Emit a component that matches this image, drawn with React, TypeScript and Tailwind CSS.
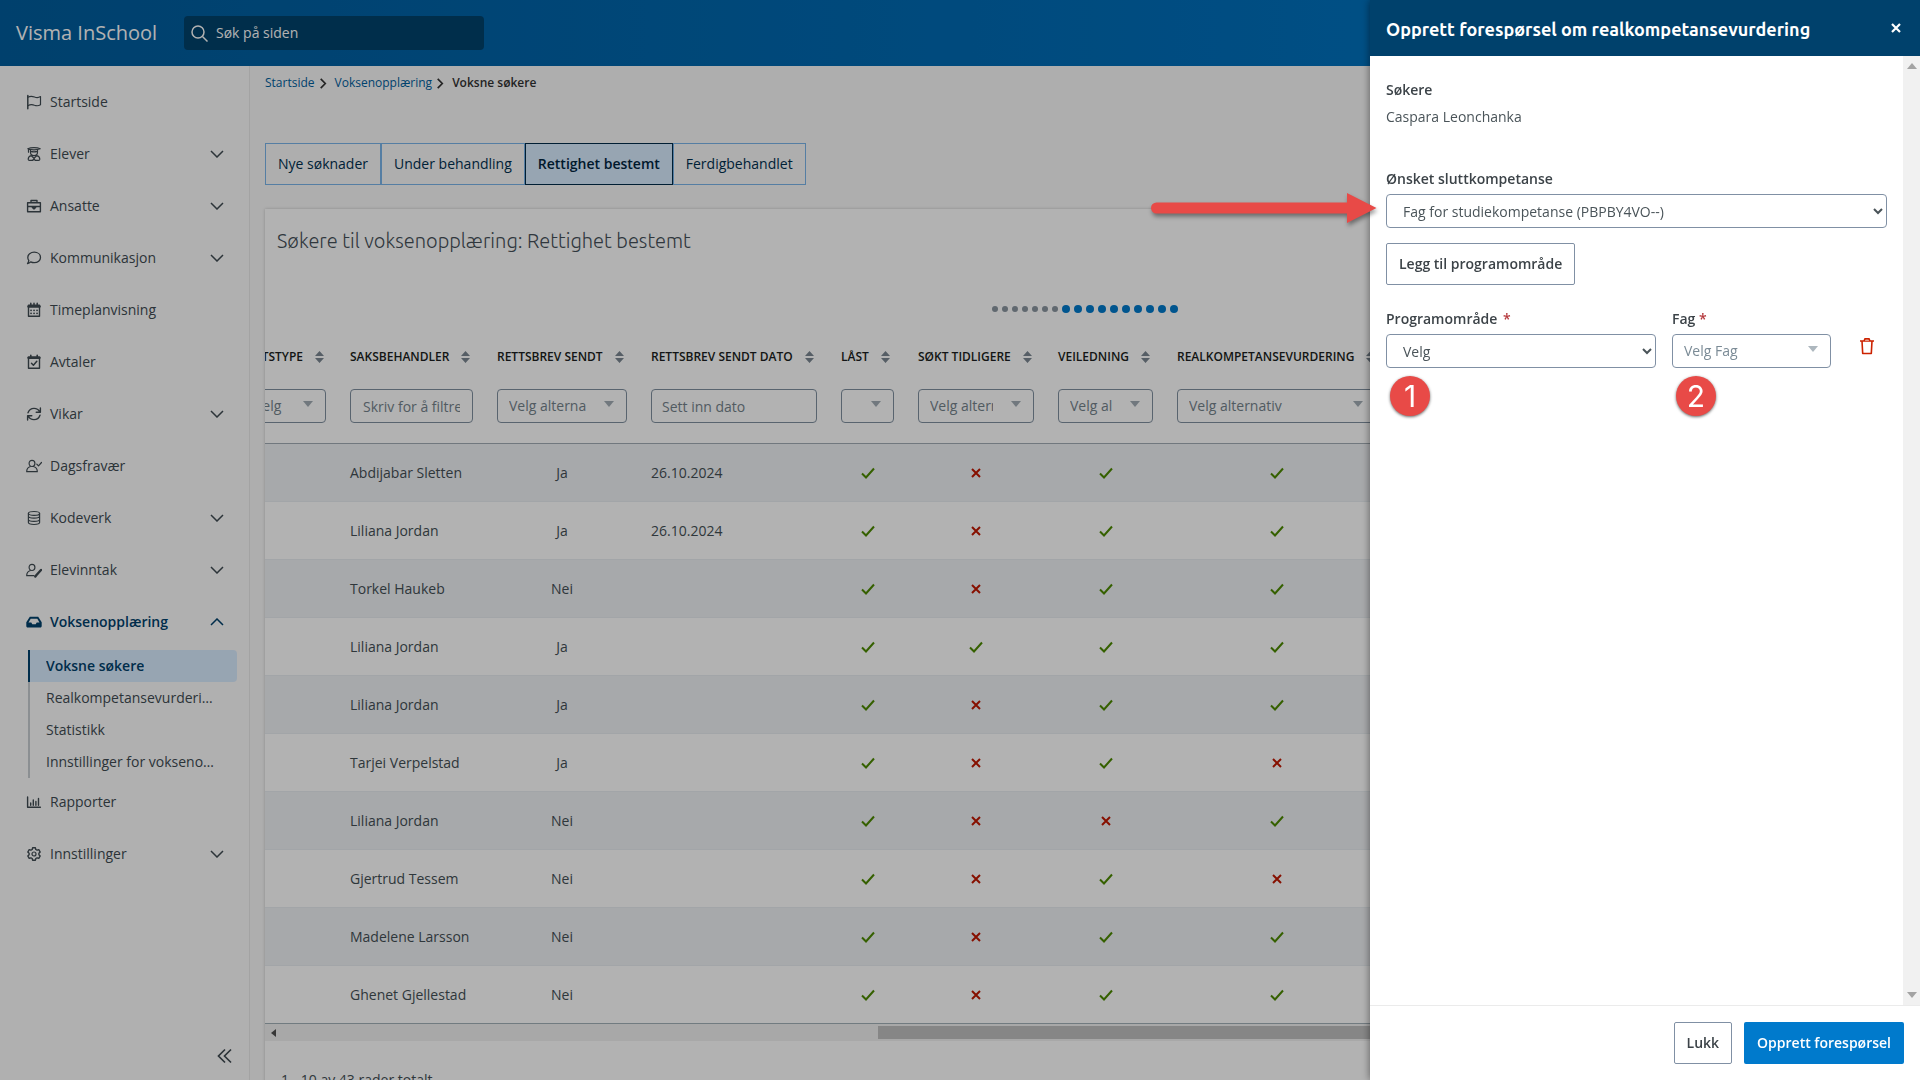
import React from "react";

type IconProps = { className?: string };

const Svg = ({ children, className = "h-4 w-4" }: { children: React.ReactNode; className?: string }) => (
  <svg
    viewBox="0 0 16 16"
    className={`shrink-0 ${className}`}
    fill="none"
    stroke="currentColor"
    strokeWidth="1.2"
    strokeLinecap="round"
    strokeLinejoin="round"
    aria-hidden="true"
  >
    {children}
  </svg>
);

const FlagIcon = () => (
  <Svg>
    <path d="M1.800 1.500v13.200" strokeWidth="1.500" />
    <path d="M1.800 3.200C4.500 1.800 6.500 2.200 8.500 3c2 .8 4 .8 6-.4v8.200c-2 1.200-4 1.200-6 .5-2-.8-4-1-6.700.4" />
  </Svg>
);
const StudentIcon = () => (
  <Svg>
    <path d="M1.800 2.800C5 1.200 11 1.200 14.200 2.800 11 4.200 5 4.200 1.800 2.800zM2.500 3v3.200" />
    <path d="M4.500 4v2.300c0 4.400 7 4.400 7 0V4M4.800 5.400c2 .6 4.400.6 6.400 0" />
    <path d="M5.300 9.700C3.300 10.200 2.200 11.200 2.200 13.200c0 .8.400 1.200 1.200 1.200h2.200c1.400 0 2.400-1 2.400-2.200 0 1.200 1 2.200 2.400 2.200h2.200c.8 0 1.200-.4 1.200-1.200 0-2-1.100-3-3.100-3.500M5.300 9.700L8 12.200l2.700-2.500" />
  </Svg>
);
const BriefcaseIcon = () => (
  <Svg>
    <path d="M5 4.500v-2h6v2M1.600 4.800h12.800v9H1.600zM1.600 8.500h12.800" strokeWidth="1.400" />
    <path d="M6.300 8.500h3.400v1L8 11 6.300 9.500z" fill="currentColor" />
  </Svg>
);
const ChatIcon = () => (
  <Svg>
    <path d="M8.200 2.200c3.600 0 6.300 2.200 6.300 5.200s-2.700 5.300-6.300 5.300c-1.300 0-2.500-.3-3.500-.8-.8.900-1.800 1.600-3.200 1.700.8-.9 1.200-2 1.300-3.200C2.100 9.500 1.800 8.500 1.800 7.400c0-3 2.800-5.200 6.400-5.200z" strokeWidth="1.300" />
  </Svg>
);
const CalendarIcon = () => (
  <Svg>
    <path d="M2.500 3.200h11v11h-11z" strokeWidth="1.400" />
    <path d="M2.500 4.500h11" strokeWidth="2.500" />
    <path d="M4.800 1.200v2M8 1.200v2M11.200 1.200v2" strokeWidth="1.500" />
    <path d="M5 8.300h.1M8 8.300h.1M11 8.300h.1M5 11.300h.1M8 11.300h.1M11 11.300h.1" strokeWidth="1.700" />
  </Svg>
);
const CalendarCheckIcon = () => (
  <Svg>
    <path d="M2.500 3.200h11v11h-11z" strokeWidth="1.400" />
    <path d="M2.500 3.800h11" strokeWidth="2.400" />
    <path d="M4.800 1.200v2M11.200 1.200v2" strokeWidth="1.600" />
    <path d="M5.500 9.300l1.900 1.900 3.400-4" strokeWidth="1.500" />
  </Svg>
);
const SyncIcon = () => (
  <Svg>
    <path d="M2 6.800C3 4 5.300 2.400 8 2.400c2.500 0 4.600 1.300 5.700 3.400M14.400 2v4.300h-4.200M14 9.200c-1 2.800-3.300 4.400-6 4.400-2.500 0-4.600-1.300-5.700-3.400M1.600 14V9.700h4.200" strokeWidth="1.400" />
  </Svg>
);
const UserCheckIcon = () => (
  <Svg>
    <path d="M6 2.300c1.700 0 2.900 1.200 2.900 3S7.700 8.500 6 8.500 3.100 7.100 3.100 5.300 4.300 2.300 6 2.300zM4 8.700C2 9.300.7 10 .7 13.700h10.600c0-3.700-1.300-4.400-3.300-5" />
    <path d="M10.800 6.200l1.700 1.700 3-3.400" />
  </Svg>
);
const UserPenIcon = () => (
  <Svg>
    <path d="M6 2.300c1.700 0 2.900 1.200 2.900 3S7.700 8.500 6 8.500 3.100 7.100 3.100 5.300 4.300 2.300 6 2.300zM4 8.700C2 9.300.7 10 .7 13.700h7.300" />
    <path d="M15 8l-4.700 5.200-1 1.300" strokeWidth="2.400" />
  </Svg>
);
const DatabaseIcon = () => (
  <Svg>
    <ellipse cx="8" cy="3.400" rx="5.600" ry="1.900" />
    <path d="M2.400 3.400v9.200c0 2.500 11.200 2.500 11.200 0V3.400M2.400 6.300c0 2.500 11.200 2.500 11.200 0M2.400 9.500c0 2.500 11.200 2.500 11.200 0" />
  </Svg>
);
const InboxIcon = () => (
  <Svg>
    <path
      d="M3.800 2.800h8.400l3.500 5.500v3.700c0 .9-.5 1.500-1.400 1.500H1.700c-.9 0-1.400-.6-1.400-1.500V8.300zM4.700 4.700L2.500 8.400h2.800l1 1.800h3.400l1-1.800h2.800l-2.200-3.700z"
      fill="currentColor"
      fillRule="evenodd"
      stroke="none"
    />
  </Svg>
);
const ChartIcon = () => (
  <Svg>
    <path d="M1.600 3v10.300h12.800" strokeWidth="1.400" />
    <path d="M4.700 11.200V9M7.300 11.200V6M9.900 11.200V7.500M12.500 11.200V4.500" strokeWidth="1.400" />
  </Svg>
);
const GearIcon = () => (
  <Svg>
    <path d="M6.600 1.800h2.800l.4 1.700 1.300.7 1.700-.5 1.400 2.400-1.300 1.200v1.400l1.300 1.200-1.400 2.400-1.700-.5-1.300.7-.4 1.700H6.600l-.4-1.700-1.300-.7-1.700.5-1.400-2.400 1.300-1.200V7.300L1.800 6.100l1.400-2.400 1.700.5 1.300-.7z" strokeWidth="1.400" />
    <circle cx="8" cy="8" r="2" />
  </Svg>
);
const Chevron = ({ up = false }: { up?: boolean }) => (
  <svg viewBox="0 0 14 8" className="h-2 w-3.5" fill="none" stroke="currentColor" strokeWidth="1.500" aria-hidden="true">
    <path d={up ? "M1 7l6-6 6 6" : "M1 1l6 6 6-6"} />
  </svg>
);

const Triangle = ({ className = "" }: IconProps) => (
  <svg viewBox="0 0 10 6" className={`h-1.5 w-2.5 ${className}`} fill="currentColor" aria-hidden="true">
    <path d="M0 0h10L5 6z" />
  </svg>
);
const SortIcon = () => (
  <svg viewBox="0 0 9 12" className="h-3 w-[9px] shrink-0 text-[#7b8792]" fill="currentColor" aria-hidden="true">
    <path d="M0 5L4.500 0 9 5zM0 7h9l-4.500 5z" />
  </svg>
);

const Mark = ({ ok }: { ok: boolean }) =>
  ok ? (
    <svg viewBox="0 0 14 12" className="mx-auto h-3 w-3.5" fill="none" stroke="#4c8a00" strokeWidth="2" role="img" aria-label="Ja">
      <path d="M1 6.500l4 4 8-9" />
    </svg>
  ) : (
    <svg viewBox="0 0 10 10" className="mx-auto h-2.5 w-2.5" fill="none" stroke="#c01800" strokeWidth="2" role="img" aria-label="Nei">
      <path d="M1 1l8 8M9 1L1 9" />
    </svg>
  );

const menuTop = [
  { label: "Startside", Icon: FlagIcon, open: false },
  { label: "Elever", Icon: StudentIcon, open: true },
  { label: "Ansatte", Icon: BriefcaseIcon, open: true },
  { label: "Kommunikasjon", Icon: ChatIcon, open: true },
  { label: "Timeplanvisning", Icon: CalendarIcon, open: false },
  { label: "Avtaler", Icon: CalendarCheckIcon, open: false },
  { label: "Vikar", Icon: SyncIcon, open: true },
  { label: "Dagsfravær", Icon: UserCheckIcon, open: false },
  { label: "Kodeverk", Icon: DatabaseIcon, open: true },
  { label: "Elevinntak", Icon: UserPenIcon, open: true },
];
const menuBottom = [
  { label: "Rapporter", Icon: ChartIcon, open: false },
  { label: "Innstillinger", Icon: GearIcon, open: true },
];
const subMenu = ["Voksne søkere", "Realkompetansevurderinger", "Statistikk", "Innstillinger for voksenopplæring"];

const MenuItem = ({ label, Icon, open }: { label: string; Icon: () => React.ReactElement; open: boolean }) => (
  <a href="#" className="mb-1 flex h-12 items-center pr-[25px] pl-[26px]">
    <Icon />
    <span className="ml-2 flex-1">{label}</span>
    {open && <Chevron />}
  </a>
);

const tabs = ["Nye søknader", "Under behandling", "Rettighet bestemt", "Ferdigbehandlet"];

const columns: { label: string; filter: "select" | "text" | "date" | "blank" }[] = [
  { label: "Rettstype", filter: "select" },
  { label: "Saksbehandler", filter: "text" },
  { label: "Rettsbrev sendt", filter: "select" },
  { label: "Rettsbrev sendt dato", filter: "date" },
  { label: "Låst", filter: "blank" },
  { label: "Søkt tidligere", filter: "select" },
  { label: "Veiledning", filter: "select" },
  { label: "Realkompetansevurdering", filter: "select" },
];

type Row = { name: string; sent: string; date: string; marks: boolean[] };
const rows: Row[] = [
  { name: "Abdijabar Sletten", sent: "Ja", date: "26.10.2024", marks: [true, false, true, true] },
  { name: "Liliana Jordan", sent: "Ja", date: "26.10.2024", marks: [true, false, true, true] },
  { name: "Torkel Haukeb", sent: "Nei", date: "", marks: [true, false, true, true] },
  { name: "Liliana Jordan", sent: "Ja", date: "", marks: [true, true, true, true] },
  { name: "Liliana Jordan", sent: "Ja", date: "", marks: [true, false, true, true] },
  { name: "Tarjei Verpelstad", sent: "Ja", date: "", marks: [true, false, true, false] },
  { name: "Liliana Jordan", sent: "Nei", date: "", marks: [true, false, false, true] },
  { name: "Gjertrud Tessem", sent: "Nei", date: "", marks: [true, false, true, false] },
  { name: "Madelene Larsson", sent: "Nei", date: "", marks: [true, false, true, true] },
  { name: "Ghenet Gjellestad", sent: "Nei", date: "", marks: [true, false, true, true] },
];

const Filter = ({ label, filter }: { label: string; filter: string }) => {
  if (filter === "text" || filter === "date") {
    return (
      <input
        aria-label={label}
        placeholder={filter === "text" ? "Skriv for å filtrere" : "Sett inn dato"}
        className={`block h-[34px] w-full rounded border border-[#8090a0] bg-white pr-3 text-sm placeholder:text-[#75838c] ${filter === "text" ? "pl-3" : "pl-2.5"}`}
      />
    );
  }
  return (
    <div className="relative">
      <select
        aria-label={label}
        className="block h-[34px] w-full appearance-none rounded border border-[#8090a0] bg-white pr-10 pl-[11px] text-sm text-[#75838c]"
      >
        <option>{filter === "blank" ? "" : "Velg alternativ"}</option>
      </select>
      <Triangle className="pointer-events-none absolute top-3 right-[13px] text-[#a3adb5]" />
    </div>
  );
};

const Sidebar = () => (
  <aside className="flex w-[250px] shrink-0 flex-col border-r border-[#eaeaea] bg-[#fdfdfd] pt-3 text-sm text-[#404b52]">
    <nav>
      {menuTop.map((m) => (
        <MenuItem key={m.label} {...m} />
      ))}
      <a href="#" className="mb-1 flex h-12 items-center pr-[25px] pl-[26px] font-semibold text-[#00416c]">
        <InboxIcon />
        <span className="ml-2 flex-1">Voksenopplæring</span>
        <Chevron up />
      </a>
      <ul className="mr-3 ml-7">
        {subMenu.map((s, i) => (
          <li key={s}>
            <a
              href="#"
              className={
                i === 0
                  ? "flex h-8 items-center rounded-r border-l-2 border-[#00416c] bg-[#d9ecff] pl-4 font-semibold text-[#00416c]"
                  : "flex h-8 items-center border-l-2 border-[#c8cdd2] pr-[18px] pl-4"
              }
            >
              <span className="truncate">{s}</span>
            </a>
          </li>
        ))}
      </ul>
      {menuBottom.map((m) => (
        <MenuItem key={m.label} {...m} />
      ))}
    </nav>
    <button aria-label="Skjul meny" className="mt-auto mr-4 mb-4 self-end">
      <svg viewBox="0 0 16 16" className="h-4 w-4" fill="none" stroke="currentColor" strokeWidth="1.700" aria-hidden="true">
        <path d="M8 1.500L1.500 8 8 14.500M14 1.500L7.500 8l6.500 6.500" />
      </svg>
    </button>
  </aside>
);

const Crumb = ({ children }: { children: string }) => (
  <li className="flex items-center gap-1">
    <a href="#" className="text-[#00609e]">
      {children}
    </a>
    <svg viewBox="0 0 8 12" className="h-[11px] w-2" fill="none" stroke="#333" strokeWidth="1.800" aria-hidden="true">
      <path d="M1.500 1l5 5-5 5" />
    </svg>
  </li>
);

const LoadingDots = () => (
  <div role="progressbar" aria-label="Laster" className="mt-[50px] mr-3 mb-[15px] flex h-2 items-center justify-center">
    {Array.from({ length: 7 }, (_, i) => (
      <span key={i} className="mr-1 h-1.5 w-1.5 rounded-full bg-[#8a95a0]" />
    ))}
    {Array.from({ length: 10 }, (_, i) => (
      <span key={i} className="mr-1 h-2 w-2 rounded-full bg-[#007acc]" />
    ))}
  </div>
);

const Table = () => (
  <div className="overflow-hidden border-b border-[#a3b0b8]">
    <table className="-ml-[35px] w-full table-fixed border-collapse text-sm text-[#444f55]">
      <colgroup>
        <col className="w-[108px]" />
        <col className="w-[147px]" />
        <col className="w-[154px]" />
        <col className="w-[190px]" />
        <col className="w-[77px]" />
        <col className="w-[140px]" />
        <col className="w-[119px]" />
        <col className="w-[223px]" />
        <col />
      </colgroup>
      <thead>
        <tr className="h-[54px]">
          {columns.map((c, i) => (
            <th key={c.label} scope="col" className="px-3 pt-1 pb-0 text-left text-xs font-semibold text-[#1a1e20]">
              <div className={i === 0 ? "flex items-center justify-end gap-3 pr-0.5" : "flex items-center gap-3"}>
                <span className="whitespace-nowrap uppercase">{c.label}</span>
                <SortIcon />
              </div>
            </th>
          ))}
          <th />
        </tr>
        <tr className="h-[61px] border-b border-[#a3adb5]">
          {columns.map((c) => (
            <td key={c.label} className="px-3 pt-[7px] align-top">
              <Filter {...c} />
            </td>
          ))}
          <td />
        </tr>
      </thead>
      <tbody>
        {rows.map((r, i) => (
          <tr key={i} className="h-[58px] border-b border-[#e8edf1] odd:bg-[#f0f2f5] last:border-0">
            <td />
            <td className="px-3 pt-0.5 whitespace-nowrap">{r.name}</td>
            <td className="px-3 pt-0.5 text-center">{r.sent}</td>
            <td className="px-3 pt-0.5">{r.date}</td>
            {r.marks.map((m, j) => (
              <td key={j} className="pt-0.5">
                <Mark ok={m} />
              </td>
            ))}
            <td />
          </tr>
        ))}
      </tbody>
    </table>
  </div>
);

const labelClass = "block text-sm leading-5 font-semibold text-[#3c4348]";

const Badge = ({ children }: { children: React.ReactNode }) => (
  <div className="mt-2 ml-1 flex h-10 w-10 items-center justify-center rounded-full bg-[#e84a47] font-[Inter,sans-serif] text-3xl text-white shadow-[0_1px_3px_rgba(0,0,0,0.6)]">
    {children}
  </div>
);

const Drawer = () => (
  <section
    role="dialog"
    aria-labelledby="drawer-title"
    className="fixed inset-y-0 right-0 z-20 flex w-[550px] flex-col bg-white text-sm text-[#4a5459] shadow-[0_0_8px_rgba(0,0,0,0.5)]"
  >
    <header className="flex h-14 shrink-0 items-center justify-between bg-[#00416c] pr-[19px] pl-4 text-white">
      <h2 id="drawer-title" className="pt-px font-[Ubuntu,'Noto_Sans',sans-serif] text-lg font-semibold">
        Opprett forespørsel om realkompetansevurdering
      </h2>
      <button aria-label="Lukk vindu">
        <svg viewBox="0 0 10 10" className="h-2.5 w-2.5" fill="none" stroke="currentColor" strokeWidth="2.200" aria-hidden="true">
          <path d="M1 1l8 8M9 1L1 9" />
        </svg>
      </button>
    </header>
    <div className="flex min-h-0 flex-1">
      <form className="min-w-0 flex-1 px-4 pt-6">
        <h3 className={labelClass}>Søkere</h3>
        <p className="mt-[7px] leading-5">Caspara Leonchanka</p>

        <div className="relative mt-[42px]">
          <label htmlFor="goal" className={labelClass}>
            Ønsket sluttkompetanse
          </label>
          <select id="goal" className="mt-[5px] block h-[34px] w-full rounded border border-[#8090a4] bg-white px-3">
            <option>Fag for studiekompetanse (PBPBY4VO--)</option>
          </select>
          <svg
            viewBox="0 0 226 32"
            className="absolute top-[23px] -left-[235px] h-8 w-[226px] drop-shadow-[1px_3px_2px_rgba(0,0,0,0.4)]"
            aria-hidden="true"
          >
            <path d="M5.500 10.500H196V1l29.500 15L196 31V21.500H5.500a5.500 5.500 0 0 1 0-11z" fill="#e84a47" />
          </svg>
        </div>

        <button type="button" className="mt-[15px] h-[42px] rounded-xs border border-[#8090a4] px-3 font-semibold text-[#3c4348]">
          Legg til programområde
        </button>

        <div className="mt-6 flex items-start">
          <div className="w-[270px]">
            <label htmlFor="area" className={labelClass}>
              Programområde <span className="ml-0.5 text-[#b5383c]">*</span>
            </label>
            <select id="area" className="mt-[5px] block h-[34px] w-full rounded border border-[#8090a4] bg-white px-3">
              <option>Velg</option>
            </select>
            <Badge>1</Badge>
          </div>
          <div className="ml-4 w-[159px]">
            <label htmlFor="subject" className={labelClass}>
              Fag <span className="text-[#b5383c]">*</span>
            </label>
            <div className="relative mt-[5px]">
              <select id="subject" className="block h-[34px] w-full appearance-none rounded border border-[#8090a4] bg-white pr-9 pl-[11px] text-[#7b8b96]">
                <option>Velg Fag</option>
              </select>
              <Triangle className="pointer-events-none absolute top-3 right-[13px] text-[#adb7be]" />
            </div>
            <Badge>2</Badge>
          </div>
          <button type="button" aria-label="Slett" className="mt-7 ml-7 text-[#cc2200]">
            <svg viewBox="0 0 16 18" className="h-[18px] w-4" fill="none" stroke="currentColor" strokeWidth="1.600" aria-hidden="true">
              <path d="M1 4h14M3 4l.7 12.500h8.600L13 4" strokeLinejoin="round" />
              <path d="M5 4l1-2.200h4L11 4" fill="#e9a090" />
            </svg>
          </button>
        </div>
      </form>
      <div className="flex w-[17px] flex-col items-center justify-between bg-[#f1f1f1] py-[7px] text-[#a3a3a3]">
        <Triangle className="rotate-180" />
        <Triangle />
      </div>
    </div>
    <footer className="flex h-[75px] shrink-0 items-center justify-end gap-3 border-t border-[#ebebeb] pr-4 font-semibold">
      <button className="h-[42px] rounded-xs border border-[#8090a4] px-3 text-[#3c4348]">Lukk</button>
      <button className="h-[42px] rounded-xs bg-[#007acc] px-[13px] text-white">Opprett forespørsel</button>
    </footer>
  </section>
);

export default function App() {
  return (
    <div className="flex h-screen flex-col overflow-hidden bg-[#f9f9f9] font-['Open_Sans','Noto_Sans',sans-serif]">
      <header className="flex h-[66px] shrink-0 items-center bg-linear-to-r from-[#005c9c] to-[#007acc] pl-4 text-white">
        <div className="w-42 text-xl">Visma InSchool</div>
        <label className="flex h-[34px] w-[300px] items-center gap-2 rounded bg-[#00426c] px-[7px]">
          <svg viewBox="0 0 17 17" className="h-[17px] w-[17px] shrink-0" fill="none" stroke="currentColor" strokeWidth="1.500" aria-hidden="true">
            <circle cx="7" cy="7" r="6" />
            <path d="M11.500 11.500l5 5" />
          </svg>
          <input aria-label="Søk på siden" placeholder="Søk på siden" className="min-w-0 flex-1 bg-transparent text-sm placeholder:text-white" />
        </label>
      </header>

      <div className="flex min-h-0 flex-1">
        <Sidebar />
        <main className="min-w-0 flex-1 pl-[15px]">
          <nav aria-label="Brødsmuler" className="pt-2">
            <ol className="flex items-center gap-2 text-xs leading-[18px]">
              <Crumb>Startside</Crumb>
              <Crumb>Voksenopplæring</Crumb>
              <li className="font-semibold text-[#333]">Voksne søkere</li>
            </ol>
          </nav>

          <div role="tablist" className="mt-[51px] flex text-sm text-[#003050]">
            {tabs.map((t, i) => (
              <button
                key={t}
                role="tab"
                aria-selected={i === 2}
                className={
                  i === 2
                    ? "h-[42px] border border-[#002c4a] bg-[#d9ecff] px-3 font-semibold text-[#00263f]"
                    : "h-[42px] border border-[#7ab5ea] px-3"
                }
              >
                {t}
              </button>
            ))}
          </div>

          <section className="mt-6 bg-white shadow-[0_0_3px_rgba(0,0,0,0.2)]">
            <h1 className="pt-[18px] pl-3 font-[Ubuntu,'Noto_Sans',sans-serif] text-xl leading-7 font-light text-[#454f58]">
              Søkere til voksenopplæring: Rettighet bestemt
            </h1>
            <LoadingDots />
            <Table />
            <div className="flex h-[17px] items-center bg-[#f1f1f1] text-[#505050]">
              <svg viewBox="0 0 5 8" className="ml-1.5 h-2 w-[5px]" fill="currentColor" aria-hidden="true">
                <path d="M5 0v8L0 4z" />
              </svg>
              <div className="ml-[36.4%] h-[13px] flex-1 bg-[#c1c1c1]" />
            </div>
            <p className="pt-[29px] pb-6 pl-4 text-sm text-[#444f55]">1 - 10 av 43 rader totalt</p>
          </section>
        </main>
      </div>

      <div className="fixed inset-0 z-10 bg-black/30" />
      <Drawer />
    </div>
  );
}
